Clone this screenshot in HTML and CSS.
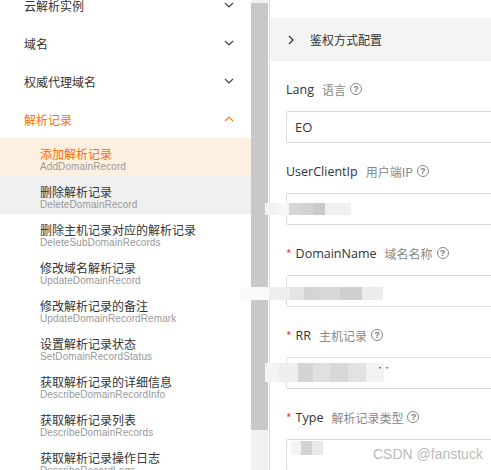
FILE: index.html
```html
<!DOCTYPE html>
<html lang="zh">
<head>
<meta charset="utf-8">
<link rel="stylesheet" href="styles.css">
</head>
<body>
<div class="app">
  <aside class="sidebar">
    <ul class="menu">
      <li class="menu-item"><span>云解析实例</span><svg class="chev" viewBox="0 0 10 6"><path d="M1 1l4 4 4-4"/></svg></li>
      <li class="menu-item"><span>域名</span><svg class="chev" viewBox="0 0 10 6"><path d="M1 1l4 4 4-4"/></svg></li>
      <li class="menu-item"><span>权威代理域名</span><svg class="chev" viewBox="0 0 10 6"><path d="M1 1l4 4 4-4"/></svg></li>
      <li class="menu-item open"><span>解析记录</span><svg class="chev" viewBox="0 0 10 6"><path d="M1 5l4-4 4 4"/></svg></li>
    </ul>
    <ul class="submenu">
      <li class="sub active"><div class="t">添加解析记录</div><div class="s">AddDomainRecord</div></li>
      <li class="sub hover"><div class="t">删除解析记录</div><div class="s">DeleteDomainRecord</div></li>
      <li class="sub"><div class="t">删除主机记录对应的解析记录</div><div class="s">DeleteSubDomainRecords</div></li>
      <li class="sub"><div class="t">修改域名解析记录</div><div class="s">UpdateDomainRecord</div></li>
      <li class="sub"><div class="t">修改解析记录的备注</div><div class="s">UpdateDomainRecordRemark</div></li>
      <li class="sub"><div class="t">设置解析记录状态</div><div class="s">SetDomainRecordStatus</div></li>
      <li class="sub"><div class="t">获取解析记录的详细信息</div><div class="s">DescribeDomainRecordInfo</div></li>
      <li class="sub"><div class="t">获取解析记录列表</div><div class="s">DescribeDomainRecords</div></li>
      <li class="sub"><div class="t">获取解析记录操作日志</div><div class="s">DescribeRecordLogs</div></li>
    </ul>
  </aside>
  <div class="scrollbar"><div class="thumb"></div></div>
  <div class="gap"></div>
  <div class="divider"></div>
  <main class="panel">
    <div class="section-head">
      <svg class="arrow" viewBox="0 0 6 10"><path d="M1 1l4 4-4 4"/></svg>
      <span>鉴权方式配置</span>
    </div>
    <form class="form">
      <div class="field">
        <div class="label"><span class="name">Lang</span><span class="desc">语言</span><span class="help">?</span></div>
        <div class="input">EO</div>
      </div>
      <div class="field">
        <div class="label"><span class="name">UserClientIp</span><span class="desc">用户端IP</span><span class="help">?</span></div>
        <div class="input"></div>
      </div>
      <div class="field">
        <div class="label"><span class="req">*</span><span class="name">DomainName</span><span class="desc">域名名称</span><span class="help">?</span></div>
        <div class="input"></div>
      </div>
      <div class="field">
        <div class="label"><span class="req">*</span><span class="name">RR</span><span class="desc">主机记录</span><span class="help">?</span></div>
        <div class="input"></div>
      </div>
      <div class="field">
        <div class="label"><span class="req">*</span><span class="name">Type</span><span class="desc">解析记录类型</span><span class="help">?</span></div>
        <div class="input"></div>
      </div>
    </form>
  </main>
  <div class="blur b1"></div>
  <div class="blur b2"></div>
  <div class="blur b3"></div>
  <div class="blur b4"></div>
  <div class="dots">··</div>
  <div class="watermark">CSDN @fanstuck</div>
</div>
</body>
</html>
```
FILE: styles.css
```css
* { box-sizing: border-box; }
html, body { margin: 0; padding: 0; background: #fff; }
body {
  width: 491px; height: 470px; overflow: hidden;
  font-family: "Noto Sans CJK SC", "Noto Sans", sans-serif;
  color: #333;
}
.app { position: relative; display: flex; width: 491px; height: 470px; overflow: hidden; }
ul { list-style: none; margin: 0; padding: 0; }

.sidebar { width: 251px; flex: none; }
.menu { margin-top: -14px; }
.menu-item {
  height: 38px; display: flex; align-items: center; justify-content: space-between;
  padding: 0 17px 0 24px; font-size: 12px; color: #333;
}
.menu-item.open { color: #ff6a00; }
.chev { width: 10px; height: 6px; fill: none; stroke: #444; stroke-width: 1.2; }
.menu-item.open .chev { stroke: #ff7a2a; }

.sub { height: 38px; padding: 8px 0 0 40px; }
.sub .t { font-size: 12px; line-height: 15px; color: #333; white-space: nowrap; }
.sub .s { font-size: 10px; line-height: 12px; color: #999; font-family: "Liberation Sans", Arial, sans-serif; white-space: nowrap; letter-spacing: 0.1px; }
.sub.active { background: #fef0e1; }
.sub.active .t { color: #ff6a00; }
.sub.hover { background: #f0f0f0; }

.scrollbar { width: 17px; flex: none; background: #f1f1f1; padding-top: 3px; }
.thumb { height: 427px; background: #c8c8c8; }
.gap { width: 1px; flex: none; background: #fff; }
.divider { width: 1px; flex: none; background: #dcdcdc; }

.panel { flex: 1; min-width: 0; overflow: hidden; }
.section-head {
  margin-top: 18px; height: 43px; background: #f4f4f4;
  display: flex; align-items: center; padding-left: 18px; font-size: 12px; color: #333;
}
.arrow { width: 6px; height: 10px; fill: none; stroke: #333; stroke-width: 1.2; margin-right: 16px; }

.form { padding: 20px 0 0 16px; margin: 0; }
.field { margin-bottom: 20px; }
.label { height: 16px; display: flex; align-items: center; font-size: 12.5px; margin-bottom: 14px; white-space: nowrap; }
.req { color: #f04134; margin-right: 4px; font-size: 12px; }
.name { color: #333; font-family: "Open Sans", "Noto Sans", sans-serif; }
.desc { color: #888; margin-left: 8px; font-size: 12px; }
.help {
  width: 12px; height: 12px; border: 1px solid #888; border-radius: 50%;
  font-size: 9px; line-height: 10px; text-align: center; color: #777; margin-left: 4px;
  font-family: "Liberation Sans", sans-serif; font-weight: bold;
}
.input {
  width: 260px; height: 32px; border: 1px solid #dcdcdc; border-radius: 2px;
  padding-left: 8px; font-size: 13px; line-height: 30px; color: #333;
  font-family: "Open Sans", "Noto Sans", sans-serif;
}

.blur { position: absolute; height: 12px; }
.b1 { left: 265px; top: 203px; width: 86px;
  background: linear-gradient(to right, #f2f2f2 0 14%, #f7f7f7 14% 28%, #d6d6d6 28% 42%, #d2d2d2 42% 56%, #cacaca 56% 70%, #f0f0f0 70% 100%); }
.b2 { left: 240px; top: 287px; width: 143px; height: 13px;
  background: linear-gradient(to right, #fafafa 0 20%, #eeeeee 20% 35%, #e4e4e4 35% 45%, #d4d4d4 45% 55%, #d8d8d8 55% 70%, #cfcfcf 70% 85%, #ececec 85% 100%); }
.b3 { left: 265px; top: 363px; width: 119px; height: 19px;
  background: linear-gradient(to right, #f4f4f4 0 12%, #eeeeee 12% 28%, #d4d4d4 28% 40%, #e0e0e0 40% 55%, #d8d8d8 55% 70%, #e2e2e2 70% 85%, #f2f2f2 85% 100%); }
.b4 { left: 291px; top: 441px; width: 32px; height: 14px;
  background: linear-gradient(to right, #f4f4f4 0 30%, #d2d2d2 30% 65%, #eaeaea 65% 100%); }
.dots { position: absolute; left: 376px; top: 364px; font-size: 8px; line-height: 8px; letter-spacing: -1px; color: #555; }
.watermark {
  position: absolute; left: 373px; top: 446px; font-size: 14px; color: #bbb;
  font-family: "Liberation Sans", Arial, sans-serif;
}
```
